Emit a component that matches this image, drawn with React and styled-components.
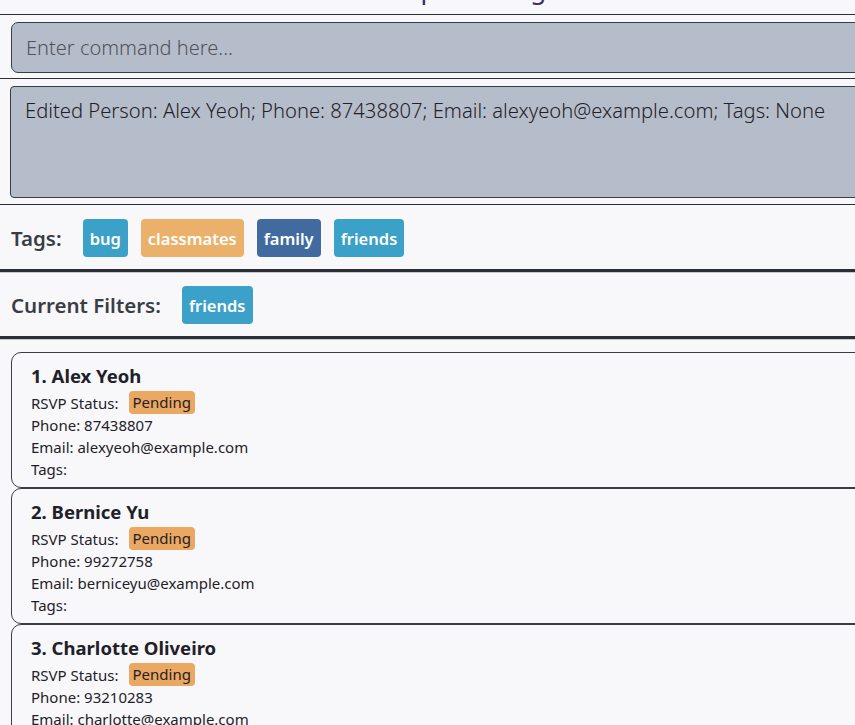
import React from "react";
import styled, { createGlobalStyle } from "styled-components";

const persons = [
  { id: 1, name: "Alex Yeoh", phone: "87438807", email: "alexyeoh@example.com" },
  { id: 2, name: "Bernice Yu", phone: "99272758", email: "berniceyu@example.com" },
  { id: 3, name: "Charlotte Oliveiro", phone: "93210283", email: "charlotte@example.com" },
];

const tags = [
  { label: "bug", color: "#3ba1c8" },
  { label: "classmates", color: "#ebb16b" },
  { label: "family", color: "#416b9e" },
  { label: "friends", color: "#3ba1c8" },
];

export default function App() {
  return (
    <Page>
      <GlobalStyle />
      <TitleStrip>
        <Title>Setup Tracking</Title>
      </TitleStrip>
      <CommandSection>
        <CommandBox placeholder="Enter command here..." readOnly />
      </CommandSection>
      <ResultSection>
        <ResultBox>
          Edited Person: Alex Yeoh; Phone: 87438807; Email: alexyeoh@example.com; Tags: None
        </ResultBox>
      </ResultSection>
      <TagRow>
        <RowLabel>Tags:</RowLabel>
        {tags.map((t) => (
          <Tag key={t.label} $bg={t.color}>
            {t.label}
          </Tag>
        ))}
      </TagRow>
      <TagRow>
        <RowLabel>Current Filters:</RowLabel>
        <Tag $bg="#3ba1c8">friends</Tag>
      </TagRow>
      <List>
        {persons.map((p) => (
          <Card key={p.id}>
            <Name>
              {p.id}. {p.name}
            </Name>
            <Line>
              RSVP Status: <Status>Pending</Status>
            </Line>
            <Line>Phone: {p.phone}</Line>
            <Line>Email: {p.email}</Line>
            <Line>Tags:</Line>
          </Card>
        ))}
      </List>
    </Page>
  );
}

const GlobalStyle = createGlobalStyle`
  body {
    margin: 0;
    background: #f8f8fb;
    font-family: "Noto Sans", "Open Sans", sans-serif;
    overflow: hidden;
  }
`;

const Page = styled.div`
  width: 855px;
  height: 725px;
  overflow: hidden;
  background: #f8f8fb;
`;

const TitleStrip = styled.div`
  height: 14px;
  overflow: hidden;
  position: relative;
  border-bottom: 1px solid #2c2f36;
`;

const Title = styled.div`
  position: absolute;
  left: 366px;
  bottom: 12px;
  font-size: 26px;
  line-height: 26px;
  color: #3b2a6e;
  white-space: nowrap;
`;

const CommandSection = styled.div`
  padding: 7px 0 5px 11px;
  border-bottom: 1px solid #2c2f36;
`;

const CommandBox = styled.input`
  display: block;
  box-sizing: border-box;
  width: 870px;
  height: 51px;
  background: #b6bdca;
  border: 1px solid #3a3d44;
  border-radius: 7px;
  padding: 0 14px;
  font-family: "Noto Sans", sans-serif;
  font-weight: 300;
  font-size: 20px;
  color: #333;
  outline: none;
  &::placeholder {
    color: #4e535c;
  }
`;

const ResultSection = styled.div`
  padding: 7px 0 6px 10px;
  border-bottom: 1px solid #2c2f36;
`;

const ResultBox = styled.div`
  box-sizing: border-box;
  width: 870px;
  height: 112px;
  background: #b6bdca;
  border: 1px solid #3a3d44;
  border-radius: 4px;
  padding: 9px 14px;
  font-size: 20.2px;
  font-weight: 300;
  color: #1f2128;
  white-space: nowrap;
`;

const TagRow = styled.div`
  display: flex;
  align-items: center;
  gap: 13px;
  box-sizing: border-box;
  height: 67px;
  padding: 2px 0 0 11px;
  border-bottom: 3px solid #2c2f36;
  box-shadow: 0 1px 0 #c6c8cf;
`;

const RowLabel = styled.span`
  font-size: 20.5px;
  font-weight: 600;
  color: #3a3d45;
  margin-right: 8px;
`;

const Tag = styled.span`
  display: inline-flex;
  align-items: center;
  height: 38px;
  padding: 0 7px;
  border-radius: 4px;
  background: ${(p) => p.$bg};
  color: #ffffff;
  font-size: 16.5px;
  font-weight: 600;
`;

const List = styled.div`
  padding: 13px 0 0 11px;
`;

const Card = styled.div`
  box-sizing: border-box;
  width: 870px;
  height: 136px;
  border: 1.5px solid #3a3d44;
  border-radius: 10px;
  padding: 10px 19px;
`;

const Name = styled.div`
  font-size: 18.5px;
  font-weight: 700;
  color: #1f2128;
  line-height: 25px;
  margin-bottom: 3px;
`;

const Line = styled.div`
  font-size: 15px;
  color: #1f2128;
  line-height: 22px;
  display: flex;
  align-items: center;
`;

const Status = styled.span`
  display: inline-block;
  margin-left: 10px;
  background: #eba862;
  border-radius: 4px;
  padding: 0 4px;
  line-height: 23px;
`;
